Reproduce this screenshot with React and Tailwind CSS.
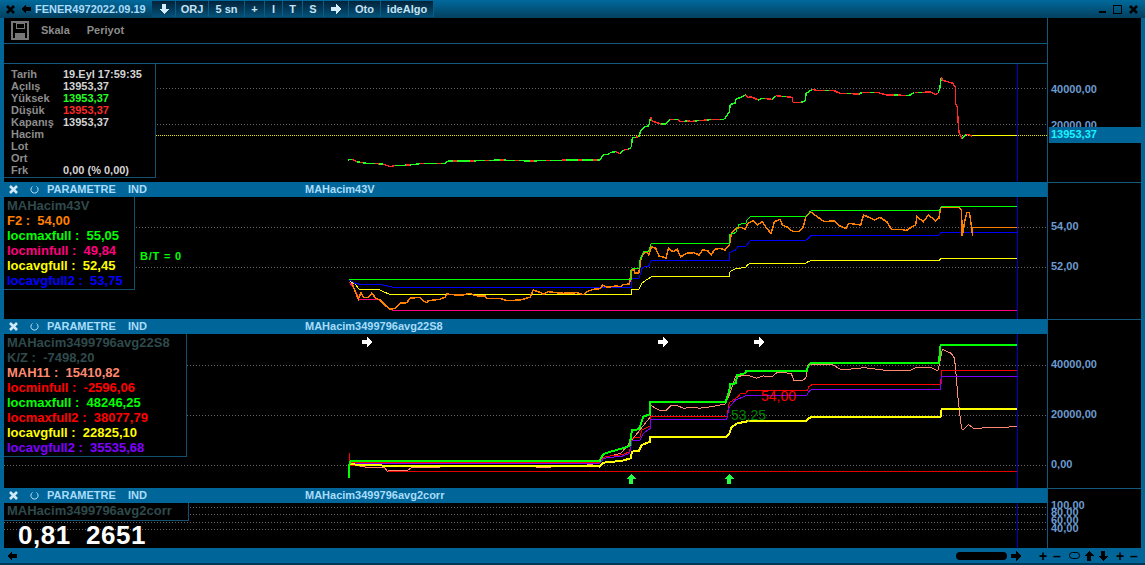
import React from 'react'

// reference traces were read off 3x crops, so points stay in crop units and get mapped here
const crop = (x0, y0, sx = 2.877) => pts => pts.map(([x, y]) => [x0 + x / sx, y0 + y / 3])
const toPts = pts => pts.map(([x, y]) => `${x.toFixed(1)},${y.toFixed(1)}`).join(' ')

const PRICE = [
  ...crop(0, 0, 3)([[1045, 480], [1055, 478], [1070, 485], [1100, 490], [1150, 492], [1170, 500], [1185, 497], [1230, 495], [1260, 491], [1310, 491], [1335, 490], [1345, 483]]),
  [470, 161], [500, 160], [530, 161], [570, 160], [590, 160],
  ...crop(600, 60)([[0, 300], [10, 283], [25, 283], [28, 278], [45, 275], [58, 281], [68, 270], [80, 268], [90, 262], [93, 234], [112, 230], [118, 210], [128, 200], [140, 198], [146, 172], [150, 183], [175, 192], [190, 192], [200, 178], [225, 178], [232, 185], [250, 183], [262, 184], [330, 178], [358, 178], [372, 155], [375, 133], [388, 130], [392, 117], [405, 112], [420, 105], [425, 113], [435, 110], [455, 120], [465, 115], [495, 118], [505, 107], [535, 110], [553, 112], [554, 127], [578, 127], [590, 123], [593, 100], [610, 88], [625, 92], [672, 91], [690, 100], [745, 102], [755, 97], [800, 98], [825, 105], [890, 106], [905, 98], [950, 96], [965, 103], [973, 100], [978, 82], [982, 50], [985, 61], [1000, 65], [1015, 70], [1022, 82], [1023, 130], [1028, 140], [1030, 180], [1033, 220], [1042, 235], [1055, 222], [1070, 228]]),
]

const priceSegments = () => {
  const out = []
  let n = 0
  for (let i = 1; i < PRICE.length; i++) {
    const [ax, ay] = PRICE[i - 1]
    const [bx, by] = PRICE[i]
    const parts = Math.max(1, Math.round((bx - ax) / 4))
    for (let p = 0; p < parts; p++) {
      n++
      const slope = (by - ay) / parts
      let color
      if (slope < -1) color = '#22ff22'
      else if (slope > 1) color = '#ff2a2a'
      else if (ax < 660) color = n % 4 === 0 ? '#ff2a2a' : '#22ff22'
      else color = n % 3 === 0 ? '#22ff22' : '#ff2a2a'
      out.push({
        key: `${i}-${p}`, color,
        x1: ax + (bx - ax) * p / parts, y1: ay + (by - ay) * p / parts,
        x2: ax + (bx - ax) * (p + 1) / parts, y2: ay + (by - ay) * (p + 1) / parts,
      })
    }
  }
  return out
}

const P2 = crop(600, 190)
const L2 = crop(300, 260, 3)
const P3 = crop(600, 320)
const L3 = crop(330, 430, 3)

const MA43 = [
  { color: '#ff0080', w: 1, pts: [...L2([[148, 66], [165, 90], [178, 118], [240, 118], [268, 147], [280, 151], [1020, 151]]), ...P2([[0, 361], [1200, 361]])] },
  { color: '#ffff00', w: 1, pts: [...L2([[148, 62], [165, 72], [178, 88], [240, 90], [268, 103], [900, 103]]), ...P2([[0, 313], [90, 313], [92, 298], [112, 298], [120, 280], [130, 272], [148, 260], [372, 259], [374, 245], [390, 236], [420, 232], [424, 224], [434, 220], [592, 220], [600, 214], [608, 212], [975, 212], [982, 205], [1200, 205]])] },
  { color: '#0000ff', w: 1, pts: [...L2([[148, 60], [165, 70], [180, 73], [240, 73], [280, 82], [900, 82]]), ...P2([[0, 292], [90, 292], [92, 266], [112, 266], [122, 232], [140, 229], [148, 211], [372, 211], [374, 187], [390, 180], [396, 170], [420, 168], [432, 152], [592, 151], [600, 144], [608, 136], [975, 136], [982, 127], [1200, 127]])] },
  { color: '#ff8000', w: 1.5, pts: [...L2([[155, 68], [175, 118], [183, 98], [190, 112], [205, 112], [215, 100], [228, 115], [240, 120], [260, 140], [270, 148], [285, 145], [300, 130], [320, 128], [330, 115], [360, 112], [370, 122], [380, 128], [385, 122], [420, 118], [435, 112], [440, 102], [470, 105], [490, 105], [510, 100], [525, 107], [555, 108], [560, 115], [600, 115], [620, 122], [660, 120], [690, 112], [700, 90], [720, 97], [730, 103], [745, 95], [770, 98], [790, 100], [830, 98], [850, 104], [860, 95], [880, 88]]), ...P2([[0, 296], [8, 285], [20, 292], [45, 288], [60, 290], [65, 284], [85, 282], [90, 240], [98, 240], [100, 250], [112, 248], [118, 205], [125, 190], [135, 185], [140, 195], [148, 170], [160, 175], [170, 198], [190, 204], [197, 175], [210, 185], [222, 178], [232, 200], [250, 190], [270, 188], [285, 195], [295, 180], [310, 182], [320, 195], [330, 178], [345, 175], [360, 180], [372, 165], [378, 130], [392, 115], [405, 112], [418, 118], [425, 100], [440, 92], [452, 105], [467, 95], [480, 115], [492, 130], [502, 95], [518, 88], [525, 105], [540, 112], [555, 125], [572, 125], [585, 110], [592, 80], [605, 65], [625, 80], [645, 95], [675, 92], [690, 108], [708, 115], [715, 100], [750, 105], [758, 75], [780, 85], [790, 90], [805, 82], [825, 95], [838, 118], [870, 118], [880, 122], [895, 112], [908, 105], [912, 80], [930, 95], [945, 75], [965, 92], [975, 85], [980, 52], [1032, 52], [1040, 60], [1042, 138], [1048, 100], [1055, 68], [1063, 68], [1068, 105], [1072, 138], [1072, 112], [1200, 112]])] },
  { color: '#00ff00', w: 1, pts: [...L2([[148, 58], [900, 58]]), ...P2([[0, 268], [90, 268], [92, 236], [112, 236], [115, 210], [125, 185], [140, 183], [148, 160], [372, 160], [374, 133], [390, 128], [400, 103], [420, 100], [424, 88], [434, 79], [592, 79], [600, 70], [608, 62], [975, 62], [982, 49], [1200, 49]])] },
]

const MA22 = [
  { color: '#e00000', w: 1, pts: [...L3([[58, 105], [88, 108], [112, 112], [162, 113], [172, 124], [810, 124]]), ...P3([[0, 454], [1200, 454]])] },
  { color: '#ff8a70', w: 1, pts: [...L3([[62, 98], [90, 108], [110, 112], [165, 114], [172, 124], [185, 120], [230, 122], [245, 113], [310, 112], [350, 110], [440, 108], [520, 107], [640, 112], [760, 107], [800, 100], [810, 98]]), ...P3([[0, 415], [60, 400], [92, 360], [145, 290], [145, 255], [155, 262], [175, 272], [190, 272], [205, 255], [225, 258], [240, 265], [270, 262], [285, 265], [320, 260], [360, 252], [372, 225], [390, 170], [425, 165], [450, 175], [470, 168], [495, 170], [510, 157], [550, 160], [558, 182], [580, 182], [592, 175], [598, 135], [620, 133], [670, 135], [695, 150], [760, 143], [815, 150], [840, 153], [890, 152], [910, 142], [950, 142], [972, 152], [978, 125], [985, 88], [1010, 100], [1020, 115], [1025, 170], [1030, 235], [1040, 325], [1045, 330], [1060, 313], [1075, 325], [1200, 320]])] },
  { color: '#ff0000', w: 1, pts: [...L3([[58, 70], [58, 105], [62, 96], [172, 96], [810, 98]]), ...P3([[0, 425], [10, 412], [30, 408], [65, 404], [85, 395], [92, 355], [115, 352], [120, 330], [145, 318], [145, 289], [365, 289], [372, 248], [395, 232], [405, 220], [420, 220], [425, 211], [597, 211], [600, 200], [612, 193], [980, 193], [983, 151], [1200, 151]])] },
  { color: '#8000ff', w: 1, pts: [...L3([[60, 100], [810, 100]]), ...P3([[0, 430], [10, 415], [65, 408], [85, 400], [92, 362], [115, 360], [125, 340], [145, 325], [145, 297], [365, 297], [372, 260], [390, 240], [420, 227], [595, 227], [600, 215], [612, 207], [980, 207], [983, 169], [1200, 169]])] },
  { color: '#ffff00', w: 2, pts: [...L3([[60, 103], [172, 107], [810, 107]]), ...P3([[0, 438], [10, 428], [65, 422], [88, 415], [92, 395], [112, 392], [120, 375], [145, 365], [145, 351], [362, 351], [372, 340], [378, 322], [395, 310], [420, 305], [425, 302], [595, 302], [600, 295], [612, 290], [980, 290], [983, 267], [1200, 267]])] },
  { color: '#00ff00', w: 2, pts: [...L3([[56, 143], [56, 108], [62, 93], [810, 93]]), ...P3([[0, 420], [10, 402], [30, 395], [65, 385], [85, 378], [92, 330], [112, 328], [125, 290], [145, 282], [145, 246], [362, 246], [372, 210], [375, 193], [390, 190], [395, 165], [418, 160], [420, 153], [595, 153], [598, 140], [608, 129], [975, 129], [980, 75], [1200, 75]])] },
]

function GridLines({ ys }) {
  return ys.map(y => <line key={y} x1="4" x2="1047" y1={y + 0.5} y2={y + 0.5} stroke="#666" strokeDasharray="1 2" />)
}

function Trace({ color, w, pts }) {
  return <polyline points={toPts(pts)} fill="none" stroke={color} strokeWidth={w} />
}

function ChartSvg({ top, height, children }) {
  return (
    <svg className="absolute inset-0" width="1043" height={height} viewBox={`4 ${top} 1043 ${height}`} shapeRendering="crispEdges">
      {children}
      <line x1="1017.5" x2="1017.5" y1={top} y2={top + height} stroke="#0000c8" />
    </svg>
  )
}

function Arrow({ className = '', color = '#000' }) {
  return (
    <svg className={`shrink-0 ${className}`} width="12" height="10" viewBox="0 0 12 10" shapeRendering="crispEdges">
      <polygon points="1,3 6,3 6,0 11,5 6,10 6,7 1,7" fill={color} />
    </svg>
  )
}

function Cross({ color = '#000' }) {
  return (
    <svg className="shrink-0" width="9" height="9" viewBox="0 0 9 9">
      <path d="M1 1 8 8M8 1 1 8" stroke={color} strokeWidth="2.6" />
    </svg>
  )
}

function Loop() {
  return (
    <svg className="shrink-0" width="9" height="10" viewBox="0 0 9 10">
      <path d="M6.5 1.5A3.6 3.6 0 1 1 2.5 1.5" fill="none" stroke="#b5def8" strokeWidth="1" />
    </svg>
  )
}

function PanelBar({ name }) {
  return (
    <div className="h-[15px] shrink-0 bg-[#006699] flex items-center text-[#a9dcfa] text-[11px] font-bold leading-none">
      <div className="w-[43px] flex items-center gap-[12px] pl-[5px]"><Cross color="#cfe9fb" /><Loop /></div>
      <span className="w-[81px]">PARAMETRE</span>
      <span className="w-[177px]">IND</span>
      <span>{name}</span>
    </div>
  )
}

function AxisLabel({ className, children }) {
  return <span className={`absolute left-[3px] text-[#6b9bd1] text-[11px] font-bold leading-none ${className}`}>{children}</span>
}

function InfoLines({ title, rows }) {
  return (
    <div className="flex flex-col text-[13px] font-bold leading-[15px] whitespace-pre">
      <div className="text-[#2f4a4c]">{title}</div>
      {rows.map(([label, value, color]) => (
        <div key={label} style={{ color }}>{label} :  {value}</div>
      ))}
    </div>
  )
}

const QUOTE = [
  ['Tarih', '19.Eyl 17:59:35', 'text-[#d4d4d4]'],
  ['Açılış', '13953,37', 'text-[#d4d4d4]'],
  ['Yüksek', '13953,37', 'text-[#22ff22]'],
  ['Düşük', '13953,37', 'text-[#ff2a2a]'],
  ['Kapanış', '13953,37', 'text-[#d4d4d4]'],
  ['Hacim', '', ''],
  ['Lot', '', ''],
  ['Ort', '', ''],
  ['Frk', '0,00 (% 0,00)', 'text-[#d4d4d4]'],
]

const BUTTONS = [
  ['w-[24px]', <Arrow key="d" className="rotate-90" color="#d5ecfa" />],
  ['w-[33px]', 'ORJ'],
  ['w-[36px]', '5 sn'],
  ['w-[20px]', '+'],
  ['w-[18px]', 'I'],
  ['w-[20px]', 'T'],
  ['w-[21px]', 'S'],
  ['w-[25px]', <Arrow key="r" color="#d5ecfa" />],
  ['w-[32px]', 'Oto'],
  ['w-[53px]', 'ideAlgo'],
]

export default function App() {
  return (
    <div className="w-[1145px] h-[565px] overflow-hidden bg-[#006699] flex flex-col font-['Liberation_Sans',sans-serif]">
      {/* Title bar */}
      <div className="h-[18px] shrink-0 bg-gradient-to-b from-[#006a9c] to-[#03405f] flex items-center pl-[6px] pr-[7px]">
        <Cross />
        <Arrow className="ml-[5px] rotate-180" />
        <span className="ml-[3px] w-[117px] text-[#a9dcfa] text-[11px] font-bold leading-none">FENER4972022.09.19</span>
        <div className="h-[16px] flex bg-gradient-to-b from-[#02233a] to-[#04527a] text-[#c6e2f3] text-[11px] font-bold leading-none">
          {BUTTONS.map(([w, label], i) => (
            <div key={i} className={`${w} flex items-center justify-center border-r border-[#0a5d86]`}>{label}</div>
          ))}
        </div>
        <div className="ml-auto flex items-center">
          <div className="w-[7px] h-[2px] bg-black mt-[6px]" />
          <div className="ml-[7px] w-[9px] h-[9px] border border-black" />
          <div className="ml-[7px]"><Cross /></div>
        </div>
      </div>

      <div className="flex-1 min-h-0 flex flex-col pl-[4px] pr-[4px]">
        {/* Toolbar */}
        <div className="flex h-[46px] shrink-0">
          <div className="w-[1043px] bg-black flex flex-col">
            <div className="h-[26px] border-b border-[#14597d] flex items-center pl-[7px] text-[#8c8c8c] text-[11px] font-bold">
              <svg width="18" height="19" viewBox="0 0 18 19" shapeRendering="crispEdges">
                <path d="M1 1h16v17H1z" fill="none" stroke="#777" strokeWidth="1.4" />
                <path d="M5 2h8v5H5z" fill="none" stroke="#777" />
                <path d="M4 12h10v6H4z" fill="#777" />
              </svg>
              <span className="ml-[12px]">Skala</span>
              <span className="ml-[17px]">Periyot</span>
            </div>
            <div className="flex-1 border-b border-[#14597d]" />
          </div>
          <div className="flex-1 bg-black border-l border-[#14597d]" />
        </div>

        {/* Price panel */}
        <div className="flex h-[118px] shrink-0">
          <div className="relative w-[1043px] bg-black">
            <ChartSvg top={64} height={118}>
              <GridLines ys={[88, 124]} />
              <line x1="4" x2="1047" y1="135.5" y2="135.5" stroke="#e8e800" strokeDasharray="1 1" />
              {priceSegments().map(s => <line key={s.key} x1={s.x1} y1={s.y1} x2={s.x2} y2={s.y2} stroke={s.color} strokeWidth="1.4" />)}
              <line x1="972" x2="1017" y1="135.5" y2="135.5" stroke="#ffff00" />
            </ChartSvg>
            <div className="absolute left-0 top-0 w-[152px] h-[114px] bg-black border-r border-b border-[#14506f] pl-[7px] pt-[4px] grid grid-cols-[52px_1fr] auto-rows-[12px] text-[11px] font-bold leading-[12px] text-[#8c8c8c]">
              {QUOTE.map(([label, value, color]) => (
                <React.Fragment key={label}>
                  <span>{label}</span>
                  <span className={`whitespace-nowrap ${color}`}>{value}</span>
                </React.Fragment>
              ))}
            </div>
          </div>
          <div className="relative flex-1 bg-black border-l border-[#14597d]">
            <AxisLabel className="top-[20px]">40000,00</AxisLabel>
            <AxisLabel className="top-[56px]">20000,00</AxisLabel>
            <div className="absolute left-[1px] right-0 top-[63px] h-[16px] bg-[#006699] pl-[2px] text-[#19f5ff] text-[11px] font-bold leading-[15px]">13953,37</div>
          </div>
        </div>

        {/* MAHacim43V */}
        <div className="flex h-[137px] shrink-0">
          <div className="w-[1043px] flex flex-col">
            <PanelBar name="MAHacim43V" />
            <div className="relative flex-1 bg-black">
              <ChartSvg top={197} height={122}>
                <GridLines ys={[227, 267]} />
                {MA43.map(t => <Trace key={t.color} {...t} />)}
              </ChartSvg>
              <div className="absolute left-0 top-0 w-[131px] h-[93px] bg-black border-r border-b border-[#14506f] pl-[3px] pt-[1px]">
                <InfoLines title="MAHacim43V" rows={[
                  ['F2', '54,00', '#ff8000'],
                  ['locmaxfull', '55,05', '#00ff00'],
                  ['locminfull', '49,84', '#ff0080'],
                  ['locavgfull', '52,45', '#ffff00'],
                  ['locavgfull2', '53,75', '#0000ff'],
                ]} />
              </div>
              <span className="absolute left-[136px] top-[54px] text-[#00ff00] text-[11px] font-bold leading-none whitespace-pre tracking-[0.8px]">B/T = 0</span>
            </div>
          </div>
          <div className="relative flex-1 bg-black border-l border-t border-[#14597d]">
            <AxisLabel className="top-[38px]">54,00</AxisLabel>
            <AxisLabel className="top-[78px]">52,00</AxisLabel>
          </div>
        </div>

        {/* MAHacim3499796avg22S8 */}
        <div className="flex h-[169px] shrink-0">
          <div className="w-[1043px] flex flex-col">
            <PanelBar name="MAHacim3499796avg22S8" />
            <div className="relative flex-1 bg-black">
              <ChartSvg top={334} height={154}>
                <GridLines ys={[365, 415, 465]} />
                {MA22.map(t => <Trace key={t.color} {...t} />)}
                <polygon transform="translate(361 337)" points="1,3 6,3 6,0 11,5 6,10 6,7 1,7" fill="#fff" />
                <polygon transform="translate(657 337)" points="1,3 6,3 6,0 11,5 6,10 6,7 1,7" fill="#fff" />
                <polygon transform="translate(753 337)" points="1,3 6,3 6,0 11,5 6,10 6,7 1,7" fill="#fff" />
                <polygon transform="translate(626 474)" points="5,0 10,5 7,5 7,10 3,10 3,5 0,5" fill="#22ff44" />
                <polygon transform="translate(724 474)" points="5,0 10,5 7,5 7,10 3,10 3,5 0,5" fill="#22ff44" />
              </ChartSvg>
              <span className="absolute left-[165px] top-[69px] text-[#141414] text-[24px] font-bold leading-none">F</span>
              <div className="absolute left-0 top-0 w-[183px] h-[123px] bg-black border-r border-b border-[#14506f] pl-[3px] pt-[1px]">
                <InfoLines title="MAHacim3499796avg22S8" rows={[
                  ['K/Z', '-7498,20', '#2f4a4c'],
                  ['MAH11', '15410,82', '#ff8a70'],
                  ['locminfull', '-2596,06', '#ff0000'],
                  ['locmaxfull', '48246,25', '#00ff00'],
                  ['locmaxfull2', '38077,79', '#ff0000'],
                  ['locavgfull', '22825,10', '#ffff00'],
                  ['locavgfull2', '35535,68', '#8000ff'],
                ]} />
              </div>
              <span className="absolute left-[757px] top-[55px] text-[#ff0000] text-[14px] leading-none">54,00</span>
              <span className="absolute left-[727px] top-[74px] text-[#008000] text-[14px] leading-none">53,25</span>
            </div>
          </div>
          <div className="relative flex-1 bg-black border-l border-t border-[#14597d]">
            <AxisLabel className="top-[39px]">40000,00</AxisLabel>
            <AxisLabel className="top-[89px]">20000,00</AxisLabel>
            <AxisLabel className="top-[139px]">0,00</AxisLabel>
          </div>
        </div>

        {/* MAHacim3499796avg2corr */}
        <div className="flex h-[60px] shrink-0">
          <div className="w-[1043px] flex flex-col">
            <PanelBar name="MAHacim3499796avg2corr" />
            <div className="relative flex-1 bg-black">
              <ChartSvg top={503} height={45}>
                <GridLines ys={[507, 514, 522, 529]} />
              </ChartSvg>
              <div className="absolute left-0 top-0 w-[185px] h-[18px] bg-black border-r border-b border-[#14506f] pl-[3px] text-[#2f4a4c] text-[13px] font-bold leading-[16px]">MAHacim3499796avg2corr</div>
              <span className="absolute left-[14px] top-[19px] text-white text-[26px] font-bold leading-none whitespace-pre tracking-[0.5px]">0,81  2651</span>
            </div>
          </div>
          <div className="relative flex-1 bg-black border-l border-t border-[#14597d]">
            <AxisLabel className="top-[11px]">100,00</AxisLabel>
            <AxisLabel className="top-[18px]">80,00</AxisLabel>
            <AxisLabel className="top-[26px]">60,00</AxisLabel>
            <AxisLabel className="top-[34px]">40,00</AxisLabel>
          </div>
        </div>
      </div>

      {/* Footer */}
      <div className="h-[15px] shrink-0 bg-[#006699] flex items-center text-black relative">
        <Arrow className="ml-[6px] rotate-180" />
        <div className="ml-auto flex items-center pr-[4px]">
          <div className="w-[51px] h-[8px] rounded-full bg-black" />
          <Arrow className="ml-[3px]" />
          <span className="ml-[14px] w-[14px] text-[14px] font-bold leading-none text-center">+</span>
          <span className="w-[14px] text-[14px] font-bold leading-none text-center">–</span>
          <div className="ml-[5px] w-[11px] h-[7px] rounded-full border border-black" />
          <Arrow className="ml-[3px] -rotate-90" />
          <Arrow className="ml-[2px] rotate-90" />
          <span className="ml-[4px] w-[14px] text-[14px] font-bold leading-none text-center">+</span>
          <span className="w-[14px] text-[14px] font-bold leading-none text-center">–</span>
        </div>
      </div>
      <div className="h-[2px] shrink-0 bg-[#013a58] overflow-hidden flex text-[#cfe9fb] text-[11px] font-bold leading-[13px] pl-[47px]">
        <span className="w-[81px]">PARAMETRE</span>
        <span className="w-[177px]">IND</span>
        <span>MAHacim3499796avg2</span>
      </div>
    </div>
  )
}
